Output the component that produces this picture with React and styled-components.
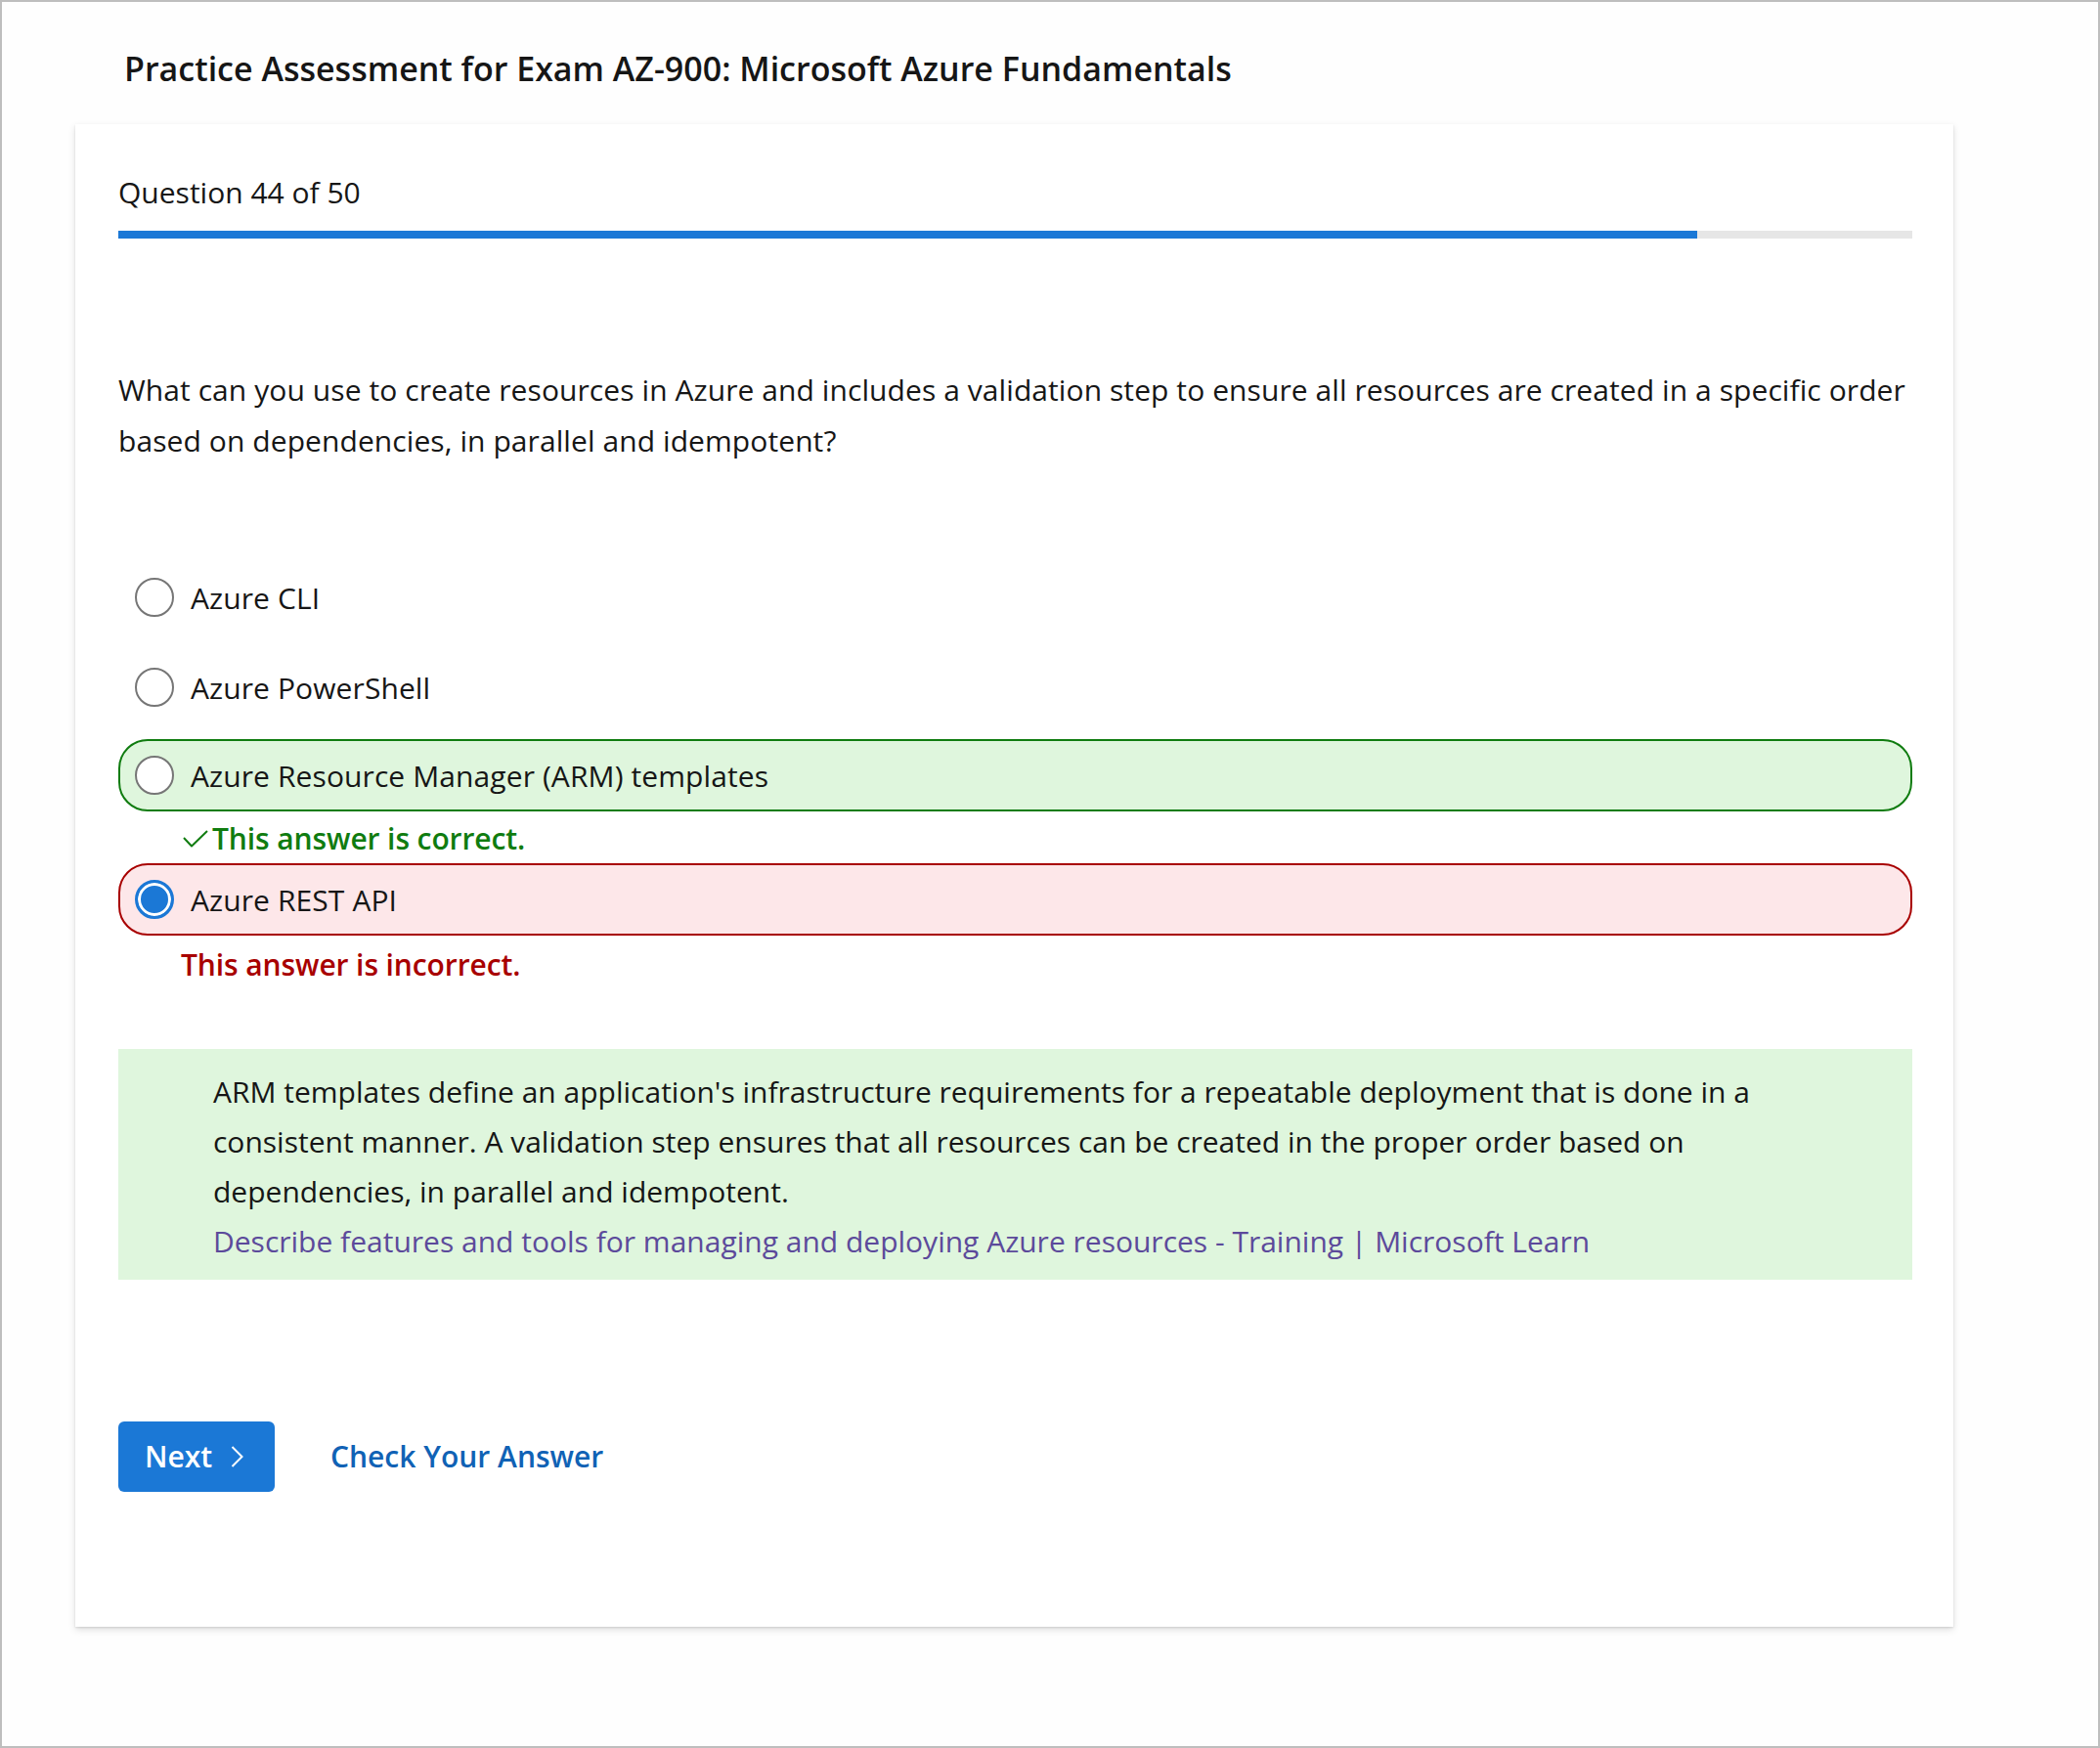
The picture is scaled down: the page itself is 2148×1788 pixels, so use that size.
import React from "react";
import styled, { createGlobalStyle } from "styled-components";

const GlobalStyle = createGlobalStyle`
  html, body {
    margin: 0;
    padding: 0;
    background: #fff;
  }
  body {
    font-family: "Open Sans", "Noto Sans", sans-serif;
    color: #161616;
  }
`;

const Frame = styled.div`
  box-sizing: border-box;
  width: 2148px;
  height: 1788px;
  border: 2px solid #bebebe;
  padding: 46px 148px 0 75px;
  background: #fefefe;
`;

const Title = styled.h1`
  margin: 0 0 0 50px;
  font-size: 34px;
  line-height: 45px;
  font-weight: 600;
  color: #161616;
`;

const Card = styled.main`
  margin-top: 34px;
  padding: 50px 42px 138px 44px;
  background: #fff;
  box-shadow: 0 3px 7px rgba(0, 0, 0, 0.13), 0 0.6px 1.8px rgba(0, 0, 0, 0.11);
`;

const Counter = styled.div`
  font-size: 30px;
  line-height: 40px;
`;

const Track = styled.div`
  margin-top: 19px;
  height: 8px;
  background: #e6e6e6;
`;

const Fill = styled.div`
  height: 100%;
  background: #1b78d6;
`;

const Question = styled.p`
  margin: 129px 0 0;
  font-size: 30px;
  line-height: 52px;
  letter-spacing: 0.08px;
`;

const Options = styled.div`
  margin-top: 97px;
  display: flex;
  flex-direction: column;
`;

const Option = styled.label`
  box-sizing: border-box;
  height: 74px;
  display: flex;
  align-items: center;
  gap: 17px;
  padding: 2px 0 0 15px;
  border: 2px solid
    ${(p) =>
      p.$state === "correct" ? "#107c10" : p.$state === "incorrect" ? "#a80000" : "transparent"};
  border-radius: 30px;
  background: ${(p) =>
    p.$state === "correct" ? "#dff6dd" : p.$state === "incorrect" ? "#fde7e9" : "transparent"};
  margin-bottom: ${(p) => p.$gap || 0}px;
  font-size: 30px;
  line-height: 40px;
  letter-spacing: 0.1px;
`;

const Radio = styled.span`
  box-sizing: border-box;
  flex: none;
  width: 40px;
  height: 40px;
  margin-top: -2px;
  border-radius: 50%;
  border: ${(p) => (p.$checked ? "3px solid #1b78d6" : "2px solid #767676")};
  background: ${(p) => (p.$checked ? "#1b78d6" : "#fff")};
  box-shadow: ${(p) => (p.$checked ? "inset 0 0 0 3px #fff" : "none")};
`;

const Feedback = styled.div`
  display: flex;
  align-items: center;
  gap: 4px;
  padding: 3px 0 0 ${(p) => (p.$ok ? 66 : 64)}px;
  margin-top: ${(p) => (p.$ok ? 0 : 2)}px;
  font-size: 30px;
  line-height: 50px;
  font-weight: 600;
  letter-spacing: -0.1px;
  color: ${(p) => (p.$ok ? "#107c10" : "#a80000")};
`;

const Explanation = styled.div`
  margin-top: 61px;
  padding: 18px 97px 14px;
  background: #dff6dd;
  font-size: 30px;
  line-height: 51px;
`;

const Link = styled.a`
  display: block;
  color: #5c4a9b;
  text-decoration: none;
`;

const Actions = styled.div`
  margin-top: 145px;
  display: flex;
  align-items: center;
  gap: 57px;
`;

const NextButton = styled.button`
  box-sizing: border-box;
  width: 160px;
  height: 72px;
  display: flex;
  align-items: center;
  gap: 19px;
  padding: 0 0 0 27px;
  border: none;
  border-radius: 6px;
  background: #1b78d6;
  color: #fff;
  font-family: inherit;
  font-size: 30px;
  line-height: 40px;
  font-weight: 600;
`;

const CheckLink = styled.a`
  font-size: 30px;
  line-height: 40px;
  font-weight: 600;
  color: #1062b5;
  text-decoration: none;
`;

const CheckMark = () => (
  <svg width="26" height="18" viewBox="0 0 26 18" fill="none">
    <polyline points="1,8 9,16.5 25,1" stroke="#107c10" strokeWidth="2" strokeLinejoin="round" />
  </svg>
);

const Chevron = () => (
  <svg width="13" height="22" viewBox="0 0 13 22" fill="none">
    <polyline points="1.5,1 11.5,11 1.5,21" stroke="#fff" strokeWidth="2" />
  </svg>
);

const current = 44;
const total = 50;

export default function App() {
  return (
    <>
      <GlobalStyle />
      <Frame>
        <Title>Practice Assessment for Exam AZ-900: Microsoft Azure Fundamentals</Title>
        <Card>
          <Counter>
            Question {current} of {total}
          </Counter>
          <Track>
            <Fill style={{ width: `${(current / total) * 100}%` }} />
          </Track>
          <Question>
            What can you use to create resources in Azure and includes a validation step to ensure all
            resources are created in a specific order based on dependencies, in parallel and idempotent?
          </Question>
          <Options>
            <Option $gap={18}>
              <Radio />
              Azure CLI
            </Option>
            <Option $gap={16}>
              <Radio />
              Azure PowerShell
            </Option>
            <Option $state="correct">
              <Radio />
              Azure Resource Manager (ARM) templates
            </Option>
            <Feedback $ok>
              <CheckMark />
              This answer is correct.
            </Feedback>
            <Option $state="incorrect">
              <Radio $checked />
              Azure REST API
            </Option>
            <Feedback>This answer is incorrect.</Feedback>
          </Options>
          <Explanation>
            ARM templates define an application's infrastructure requirements for a repeatable deployment
            that is done in a consistent manner. A validation step ensures that all resources can be
            created in the proper order based on dependencies, in parallel and idempotent.
            <Link href="#">
              Describe features and tools for managing and deploying Azure resources - Training | Microsoft
              Learn
            </Link>
          </Explanation>
          <Actions>
            <NextButton>
              Next
              <Chevron />
            </NextButton>
            <CheckLink href="#">Check Your Answer</CheckLink>
          </Actions>
        </Card>
      </Frame>
    </>
  );
}
